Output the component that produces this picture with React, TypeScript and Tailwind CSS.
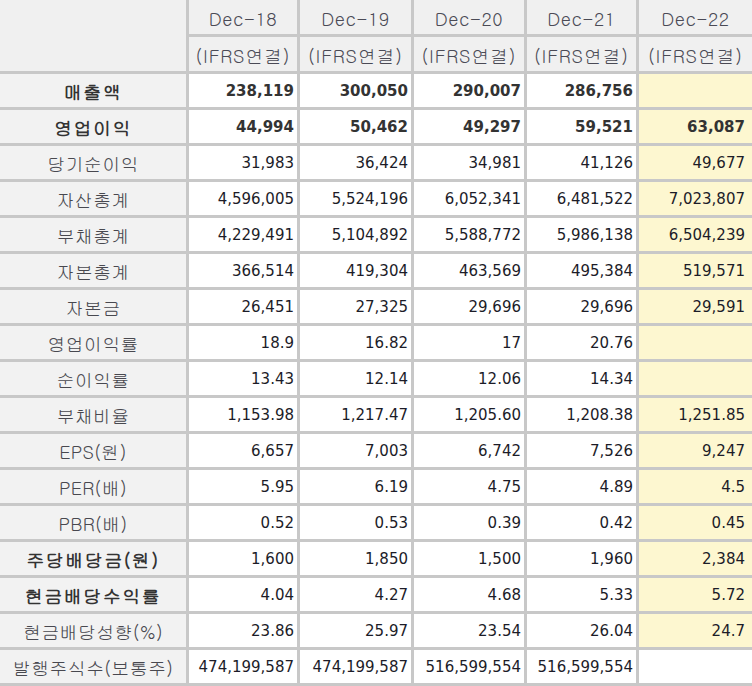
import React from "react";

type Row = {
  label: string;
  values: string[];
  boldLabel?: boolean;
  boldValues?: boolean;
  lastWhite?: boolean;
};

const years = ["Dec-18", "Dec-19", "Dec-20", "Dec-21", "Dec-22"];

const rows: Row[] = [
  { label: "매출액", values: ["238,119", "300,050", "290,007", "286,756", ""], boldLabel: true, boldValues: true },
  { label: "영업이익", values: ["44,994", "50,462", "49,297", "59,521", "63,087"], boldLabel: true, boldValues: true },
  { label: "당기순이익", values: ["31,983", "36,424", "34,981", "41,126", "49,677"] },
  { label: "자산총계", values: ["4,596,005", "5,524,196", "6,052,341", "6,481,522", "7,023,807"] },
  { label: "부채총계", values: ["4,229,491", "5,104,892", "5,588,772", "5,986,138", "6,504,239"] },
  { label: "자본총계", values: ["366,514", "419,304", "463,569", "495,384", "519,571"] },
  { label: "자본금", values: ["26,451", "27,325", "29,696", "29,696", "29,591"] },
  { label: "영업이익률", values: ["18.9", "16.82", "17", "20.76", ""] },
  { label: "순이익률", values: ["13.43", "12.14", "12.06", "14.34", ""] },
  { label: "부채비율", values: ["1,153.98", "1,217.47", "1,205.60", "1,208.38", "1,251.85"] },
  { label: "EPS(원)", values: ["6,657", "7,003", "6,742", "7,526", "9,247"] },
  { label: "PER(배)", values: ["5.95", "6.19", "4.75", "4.89", "4.5"] },
  { label: "PBR(배)", values: ["0.52", "0.53", "0.39", "0.42", "0.45"] },
  { label: "주당배당금(원)", values: ["1,600", "1,850", "1,500", "1,960", "2,384"], boldLabel: true },
  { label: "현금배당수익률", values: ["4.04", "4.27", "4.68", "5.33", "5.72"], boldLabel: true },
  { label: "현금배당성향(%)", values: ["23.86", "25.97", "23.54", "26.04", "24.7"] },
  { label: "발행주식수(보통주)", values: ["474,199,587", "474,199,587", "516,599,554", "516,599,554", ""], lastWhite: true },
];

const kr = "font-['Gulim','Noto_Sans_CJK_KR',sans-serif]";
const num = "font-['DejaVu_Sans','Verdana',sans-serif]";

export default function App() {
  return (
    <div className="w-[752px] h-[686px] overflow-hidden bg-[#c8c8c8]">
      <div className="grid grid-cols-[186px_108px_111px_110px_109px_1fr] grid-rows-[34px_34px_repeat(17,33px)] gap-[3px] pb-[3px]">
        {/* top-left empty header */}
        <div className="row-span-2 bg-[#f0f0f0]" />
        {years.map((y) => (
          <div
            key={y}
            className={`${kr} flex items-center justify-center bg-[#f0f0f0] pt-[3px] text-[18px] tracking-[0.5px] text-[#4a4a55]`}
          >
            {y}
          </div>
        ))}
        {years.map((y) => (
          <div
            key={y + "-ifrs"}
            className={`${kr} flex items-center justify-center bg-[#f0f0f0] pt-[3px] text-[18px] tracking-[0.8px] text-[#4a4a55]`}
          >
            (IFRS연결)
          </div>
        ))}

        {rows.map((r) => (
          <React.Fragment key={r.label}>
            <div
              className={`${kr} flex items-center justify-center bg-[#f2f2f2] pt-[2px] text-[18px] ${
                r.boldLabel
                  ? "font-bold tracking-[1.5px] text-[#333]"
                  : "tracking-[0.3px] text-[#48484f]"
              }`}
            >
              {r.label}
            </div>
            {r.values.map((v, i) => {
              const last = i === 4;
              const bg = last && !r.lastWhite ? "bg-[#fdf7d0]" : "bg-white";
              return (
                <div
                  key={i}
                  className={`${num} ${bg} flex items-center justify-end pt-[2px] text-[15px] ${
                    last ? "pr-[7px]" : "pr-[3px]"
                  } ${r.boldValues ? "font-bold text-[#333]" : "text-[#1c1c28]"}`}
                >
                  {v}
                </div>
              );
            })}
          </React.Fragment>
        ))}
      </div>
    </div>
  );
}
